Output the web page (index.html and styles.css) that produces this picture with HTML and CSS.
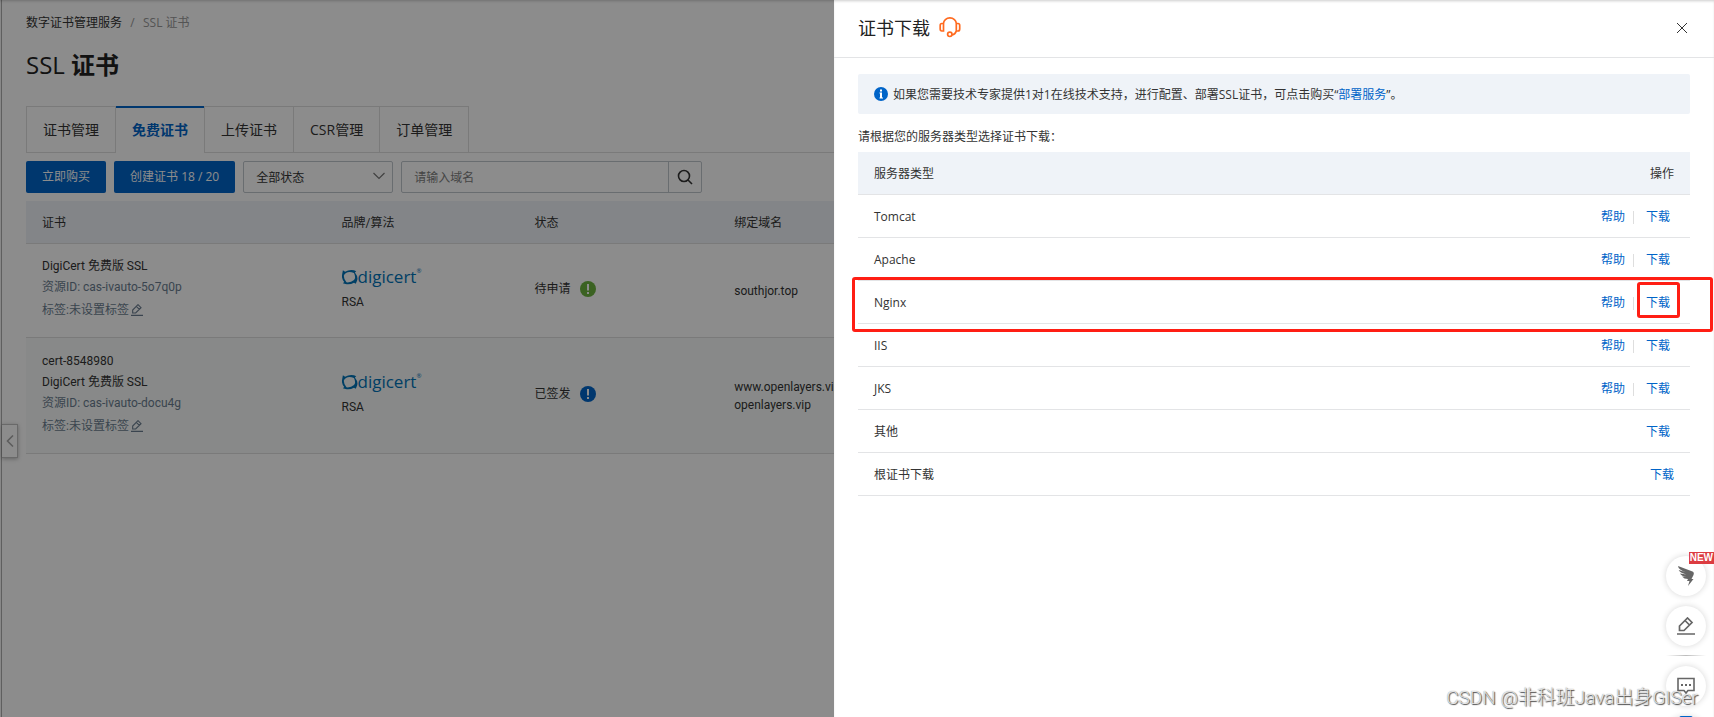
FILE: index.html
```html
<!DOCTYPE html>
<html lang="zh-CN">
<head>
<meta charset="utf-8">
<title>SSL 证书</title>
<link rel="stylesheet" href="styles.css">
</head>
<body>
<svg class="defs" aria-hidden="true">
  <symbol id="i-edit" viewBox="0 0 18 18"><path d="M0 17h18M2.500 13.500V9L10.500 1 15 5.500 7 13.500ZM8 3.500 12.500 8" fill="none" stroke="currentColor" stroke-width="1.700"/></symbol>
  <symbol id="i-ring" viewBox="0 0 18 18"><path d="M0 7 1 1.500 3.500 3Q8 .500 13.500 1.500L16 2.500 14.500 4Q18.500 9 17 13L15.500 16.500 13.500 15.500Q9 18 4 17L1 16 2.500 14.500Q-.500 11 0 7ZM2 7.500Q2 11 5 15 10 15.500 13.500 12.500 16 10 13.500 4.500 8 2.500 4.500 4.500 2.500 6 2 7.500Z" fill="#0073b8" fill-rule="evenodd"/></symbol>
</svg>

<main class="page">
  <nav class="breadcrumb" aria-label="breadcrumb"><a href="#">数字证书管理服务</a><span class="slash">/</span><span class="here">SSL 证书</span></nav>
  <h1 class="page-title">SSL <b>证书</b></h1>
  <div class="tabs" role="tablist">
    <button class="tab" role="tab">证书管理</button>
    <button class="tab active" role="tab" aria-selected="true">免费证书</button>
    <button class="tab" role="tab">上传证书</button>
    <button class="tab" role="tab">CSR管理</button>
    <button class="tab" role="tab">订单管理</button>
  </div>
  <div class="toolbar">
    <button class="primary">立即购买</button>
    <button class="primary">创建证书 18 / 20</button>
    <div class="select-wrap">
      <select class="select" aria-label="状态"><option>全部状态</option></select>
      <svg class="caret" viewBox="0 0 12 8"><path d="M.500 1 6 6.500 11.500 1" fill="none" stroke="currentColor" stroke-width="1.200"/></svg>
    </div>
    <div class="search">
      <input class="search-input" type="text" placeholder="请输入域名" aria-label="域名">
      <button class="search-btn" aria-label="搜索"><svg viewBox="0 0 16 16"><circle cx="7" cy="7" r="5.500" fill="none" stroke="currentColor" stroke-width="1.600"/><path d="M11 11l4 4" stroke="currentColor" stroke-width="1.600"/></svg></button>
    </div>
  </div>
  <table class="certs">
    <colgroup><col class="c-cert"><col class="c-brand"><col class="c-state"><col></colgroup>
    <thead><tr><th>证书</th><th>品牌/算法</th><th>状态</th><th>绑定域名</th></tr></thead>
    <tbody>
      <tr>
        <td>
          <div class="line">DigiCert 免费版 SSL</div>
          <div class="line muted">资源ID: cas-ivauto-5o7q0p</div>
          <div class="line muted tag">标签:未设置标签<svg class="edit"><use href="#i-edit"/></svg></div>
        </td>
        <td><div class="logo"><svg class="ring"><use href="#i-ring"/></svg><span>digicert</span><sup>®</sup></div><div class="algo">RSA</div></td>
        <td><div class="state">待申请<svg class="mark green" viewBox="0 0 16 16"><circle cx="8" cy="8" r="8" fill="currentColor"/><path d="M7 3h2v6.500H7zM7 11h2v2H7z" fill="#fff"/></svg></div></td>
        <td class="domain">southjor.top</td>
      </tr>
      <tr class="hover">
        <td>
          <div class="line name">cert-8548980</div>
          <div class="line">DigiCert 免费版 SSL</div>
          <div class="line muted">资源ID: cas-ivauto-docu4g</div>
          <div class="line muted tag">标签:未设置标签<svg class="edit"><use href="#i-edit"/></svg></div>
        </td>
        <td><div class="logo"><svg class="ring"><use href="#i-ring"/></svg><span>digicert</span><sup>®</sup></div><div class="algo">RSA</div></td>
        <td><div class="state">已签发<svg class="mark blue" viewBox="0 0 16 16"><circle cx="8" cy="8" r="8" fill="currentColor"/><path d="M7 3h2v6.500H7zM7 11h2v2H7z" fill="#fff"/></svg></div></td>
        <td class="domain">www.openlayers.vip<br>openlayers.vip</td>
      </tr>
    </tbody>
  </table>
  <button class="collapse" aria-label="展开菜单"><svg viewBox="0 0 8 12"><path d="M7 .500 1.500 6 7 11.500" fill="none" stroke="currentColor" stroke-width="1.600"/></svg></button>
</main>

<div class="mask"></div>

<aside class="drawer" role="dialog" aria-label="证书下载">
  <header class="drawer-head">
    <h2 class="drawer-title">证书下载</h2>
    <svg class="headset" viewBox="0 0 22 22"><g fill="none" stroke="#ff6a1f" stroke-width="1.700"><path d="M4.500 6.500a6.300 5.500 0 0 1 12.800 0M17.300 14q-.800 3-4.300 4M4.500 6.500v7.500H2.800Q1.200 14 1.200 12V8.500Q1.200 6.500 2.800 6.500ZM17.300 6.500V14H19q1.700 0 1.700-2V8.500q0-2-1.700-2Z"/><circle cx="10.800" cy="17.300" r="2.200"/></g></svg>
    <button class="close" aria-label="关闭"><svg viewBox="0 0 12 12"><path d="M1 1l10 10M11 1 1 11" stroke="currentColor" stroke-width="1"/></svg></button>
  </header>
  <div class="drawer-body">
    <div class="notice">
      <svg class="info" viewBox="0 0 14 14"><circle cx="7" cy="7" r="7" fill="#0064c8"/><path d="M6 2.500h2v2H6zM5.500 5.500H8v5h1v1H5.500v-1H6v-4h-.5z" fill="#fff"/></svg>
      <p>如果您需要技术专家提供1对1在线技术支持，进行配置、部署SSL证书，可点击购买“<a href="#">部署服务</a>”。</p>
    </div>
    <p class="hint">请根据您的服务器类型选择证书下载：</p>
    <table class="servers">
      <thead><tr><th>服务器类型</th><th class="ops">操作</th></tr></thead>
      <tbody>
        <tr><td>Tomcat</td><td class="ops"><a href="#">帮助</a><i class="bar"></i><a href="#" class="dl">下载</a></td></tr>
        <tr><td>Apache</td><td class="ops"><a href="#">帮助</a><i class="bar"></i><a href="#" class="dl">下载</a></td></tr>
        <tr class="marked"><td>Nginx</td><td class="ops"><a href="#">帮助</a><i class="bar"></i><a href="#" class="dl">下载</a></td></tr>
        <tr><td>IIS</td><td class="ops"><a href="#">帮助</a><i class="bar"></i><a href="#" class="dl">下载</a></td></tr>
        <tr><td>JKS</td><td class="ops"><a href="#">帮助</a><i class="bar"></i><a href="#" class="dl">下载</a></td></tr>
        <tr><td>其他</td><td class="ops"><a href="#" class="dl">下载</a></td></tr>
        <tr><td>根证书下载</td><td class="ops"><a href="#">下载</a></td></tr>
      </tbody>
    </table>
  </div>
</aside>

<div class="dock">
  <button class="round" aria-label="钉钉"><svg class="wing" viewBox="0 0 18 20"><path d="M1 0 15.500 5.500Q17.500 6.500 16.500 9L14.500 13h2L11 20 12.500 15H10L11 13Q7 13 5 10.500L9.500 11Q4.500 10 3 7.500L9.500 8.500Q2.500 6.500 1.700 4L9 6.300Q1.500 4 1 0Z" fill="currentColor"/></svg><span class="new">NEW</span></button>
  <button class="round" aria-label="反馈"><svg viewBox="0 0 18 18"><use href="#i-edit"/></svg></button>
  <hr class="rule">
  <button class="round" aria-label="咨询"><svg viewBox="0 0 18 18"><path d="M1 1.500h16v12h-6L9 16l-2-2.500H1Z" fill="none" stroke="currentColor" stroke-width="1.600"/><path d="M4 7h2v2H4zM8 7h2v2H8zM12 7h2v2h-2z" fill="currentColor"/></svg></button>
  <button class="round last" aria-label="更多"><svg viewBox="0 0 20 20"><circle cx="10" cy="8" r="10" fill="#0064c8"/></svg></button>
</div>
<div class="watermark">CSDN @非科班Java出身GISer</div>
</body>
</html>
```
FILE: styles.css
```css
* { box-sizing: border-box; }
body {
  margin: 0;
  height: 100vh;
  overflow: hidden;
  position: relative;
  background: #fff;
  color: #333;
  font: 12px/18px "Open Sans", "Noto Sans CJK SC", sans-serif;
}
button, input, select { font: inherit; color: inherit; margin: 0; }
button { cursor: pointer; }
p, h1, h2 { margin: 0; font-weight: 400; }
a { color: #0064c8; text-decoration: none; }
table { width: 100%; border-collapse: separate; border-spacing: 0; }
th { font-weight: 400; text-align: left; }
svg { display: block; }
.defs { position: absolute; width: 0; height: 0; }

.page {
  height: 100%;
  margin-left: 1px;
  padding: 13px 24px 0 24px;
  border-left: 1px solid #b0b0b0;
  position: relative;
}
.breadcrumb { display: flex; gap: 8px; line-height: 20px; }
.breadcrumb a { color: #333; }
.slash, .here { color: #999; }
.slash { width: 5px; text-align: center; }
.page-title { margin-top: 14px; font-size: 24px; line-height: 36px; font-weight: 500; color: #222; }
.page-title b { font-weight: 700; }
.tabs {
  margin-top: 23px;
  display: flex;
  border-bottom: 1px solid #dedede;
}
.tab {
  height: 47px;
  margin-bottom: -1px;
  padding: 0 16px;
  font-size: 14px;
  background: #fff;
  border: 1px solid #dedede;
  border-left-width: 0;
}
.tab:first-child, .tab.active + .tab { border-left-width: 1px; }
.tab.active {
  padding-bottom: 2px;
  color: #0064c8;
  font-weight: 700;
  border: 0;
  border-top: 2px solid #0064c8;
}
.toolbar { display: flex; gap: 8px; margin: 8px 0; }
.primary {
  height: 32px;
  padding: 0 16px;
  border: 0;
  border-radius: 2px;
  background: #0064c8;
  color: #fff;
}
.select-wrap { position: relative; width: 150px; }
.select {
  appearance: none;
  width: 100%;
  height: 32px;
  padding: 2px 12px 0;
  border: 1px solid #c0c6cc;
  border-radius: 2px;
  background: #fff;
}
.caret { position: absolute; right: 8px; top: 11px; width: 12px; height: 8px; color: #777; pointer-events: none; }
.search { display: flex; width: 301px; height: 32px; border: 1px solid #c0c6cc; border-radius: 2px; }
.search-input { flex: 1; min-width: 0; border: 0; padding: 2px 12px 0; background: none; outline: 0; }
.search-input::placeholder { color: #808080; }
.search-btn { width: 33px; padding: 0 8px; border: 0; border-left: 1px solid #c0c6cc; background: none; }
.search-btn svg { width: 16px; height: 16px; }

.certs { table-layout: fixed; font-family: Roboto, "Noto Sans CJK SC", sans-serif; }
.c-cert { width: 18%; }
.c-brand { width: 11.6%; }
.c-state { width: 12%; }
.certs th { height: 43px; padding: 2px 16px 0; background: #eff3f8; border-bottom: 1px solid #dedede; }
.certs td { padding: 12px 16px 15px; border-bottom: 1px solid #dedede; vertical-align: middle; }
.hover td { background: #f7faf9; }
.line { line-height: 21px; }
.name { line-height: 22px; }
.tag { display: flex; align-items: center; gap: 2px; line-height: 24px; }
.muted { color: #6b7d90; }
.edit { width: 12px; height: 12px; }
.logo {
  display: flex;
  align-items: center;
  height: 20px;
  font: 17px/20px "Open Sans", sans-serif;
  color: #0073b8;
}
.ring { width: 16px; height: 16px; }
.logo sup { font-size: 6px; line-height: 8px; align-self: flex-start; }
.algo { margin-top: 6px; }
.certs .domain { padding-top: 15px; }
.state { display: flex; align-items: center; gap: 9px; }
.mark { width: 16px; height: 16px; }
.green { color: #6cb33f; }
.blue { color: #0064c8; }
.collapse {
  position: absolute;
  left: 0;
  top: 424px;
  width: 16px;
  height: 34px;
  padding: 0 4px;
  border: 1px solid #c0c0c0;
  border-left: 0;
  background: #fff;
  color: #aaa;
  box-shadow: 0 1px 4px rgba(0, 0, 0, .3);
}
.collapse svg { width: 8px; height: 12px; }

.mask { position: absolute; inset: 0; background: rgba(0, 0, 0, .45); box-shadow: inset 0 2px 3px -1px rgba(0, 0, 0, .2); }

.drawer {
  position: absolute;
  top: 0;
  right: 0;
  bottom: 0;
  width: 880px;
  background: #fff;
  box-shadow: inset 0 2px 3px -1px rgba(0, 0, 0, .2);
}
.drawer-head {
  display: flex;
  align-items: center;
  padding: 16px 24px 17px;
  border-bottom: 1px solid #e3e4e6;
}
.drawer-title { font-size: 18px; line-height: 24px; color: #222; }
.headset { width: 22px; height: 22px; margin-left: 9px; }
.close { margin-left: auto; width: 16px; height: 16px; padding: 2px; border: 0; background: none; }
.drawer-body { padding: 16px 24px; }
.notice {
  display: flex;
  align-items: center;
  gap: 5px;
  height: 40px;
  padding: 0 16px;
  border-radius: 2px;
  background: #eff3f8;
}
.notice p { padding-top: 2px; }
.info { width: 14px; height: 14px; }
.hint { margin: 14px 0 6px; }
.servers th, .servers td { height: 43px; padding: 2px 16px 0; border-bottom: 1px solid #e3e4e6; }
.servers th { background: #eff3f8; }
.servers .ops { text-align: right; }
.bar { display: inline-block; width: 1px; height: 13px; margin: 0 12px 0 8px; background: #dedede; vertical-align: middle; }
.dl { margin-right: 4px; position: relative; }
.marked { position: relative; }
.marked::after {
  content: "";
  position: absolute;
  inset: -4px -23px -8px -6px;
  border: 3px solid #ff1e14;
  border-radius: 3px;
  pointer-events: none;
}
.marked .dl::after {
  content: "";
  position: absolute;
  inset: -12px -10px -7px -9px;
  border: 3px solid #ff1e14;
  border-radius: 3px;
}

.dock {
  position: absolute;
  right: 0;
  top: 546px;
  bottom: 0;
  padding: 10px 8px 0;
  overflow: hidden;
  display: flex;
  flex-direction: column;
  gap: 10px;
}
.round {
  position: relative;
  flex: none;
  display: grid;
  place-items: center;
  width: 40px;
  height: 40px;
  padding: 0;
  border: 0;
  border-radius: 50%;
  background: #fff;
  color: #666;
  box-shadow: 0 0 6px rgba(0, 0, 0, .16);
}
.round svg { width: 18px; height: 18px; }
.round .wing { height: 20px; }
.new {
  position: absolute;
  top: -4px;
  right: -8px;
  padding: 0 1px;
  font: 700 10px/12px "Liberation Sans", sans-serif;
  color: #fff;
  background: #dc3c41;
}
.rule { flex: none; width: 40px; height: 1px; margin: -1px 0 0; border: 0; background: linear-gradient(90deg, transparent, #bbb, transparent); }
.round.last { place-items: start center; border-radius: 20px; }
.watermark {
  position: absolute;
  right: 16px;
  bottom: 6px;
  font: 300 19px/26px Roboto, "Noto Sans CJK SC", sans-serif;
  color: rgba(255, 255, 255, .8);
  text-shadow: 1px 1px 1px rgba(0, 0, 0, .7), 0 0 1px rgba(0, 0, 0, .5);
}
```
